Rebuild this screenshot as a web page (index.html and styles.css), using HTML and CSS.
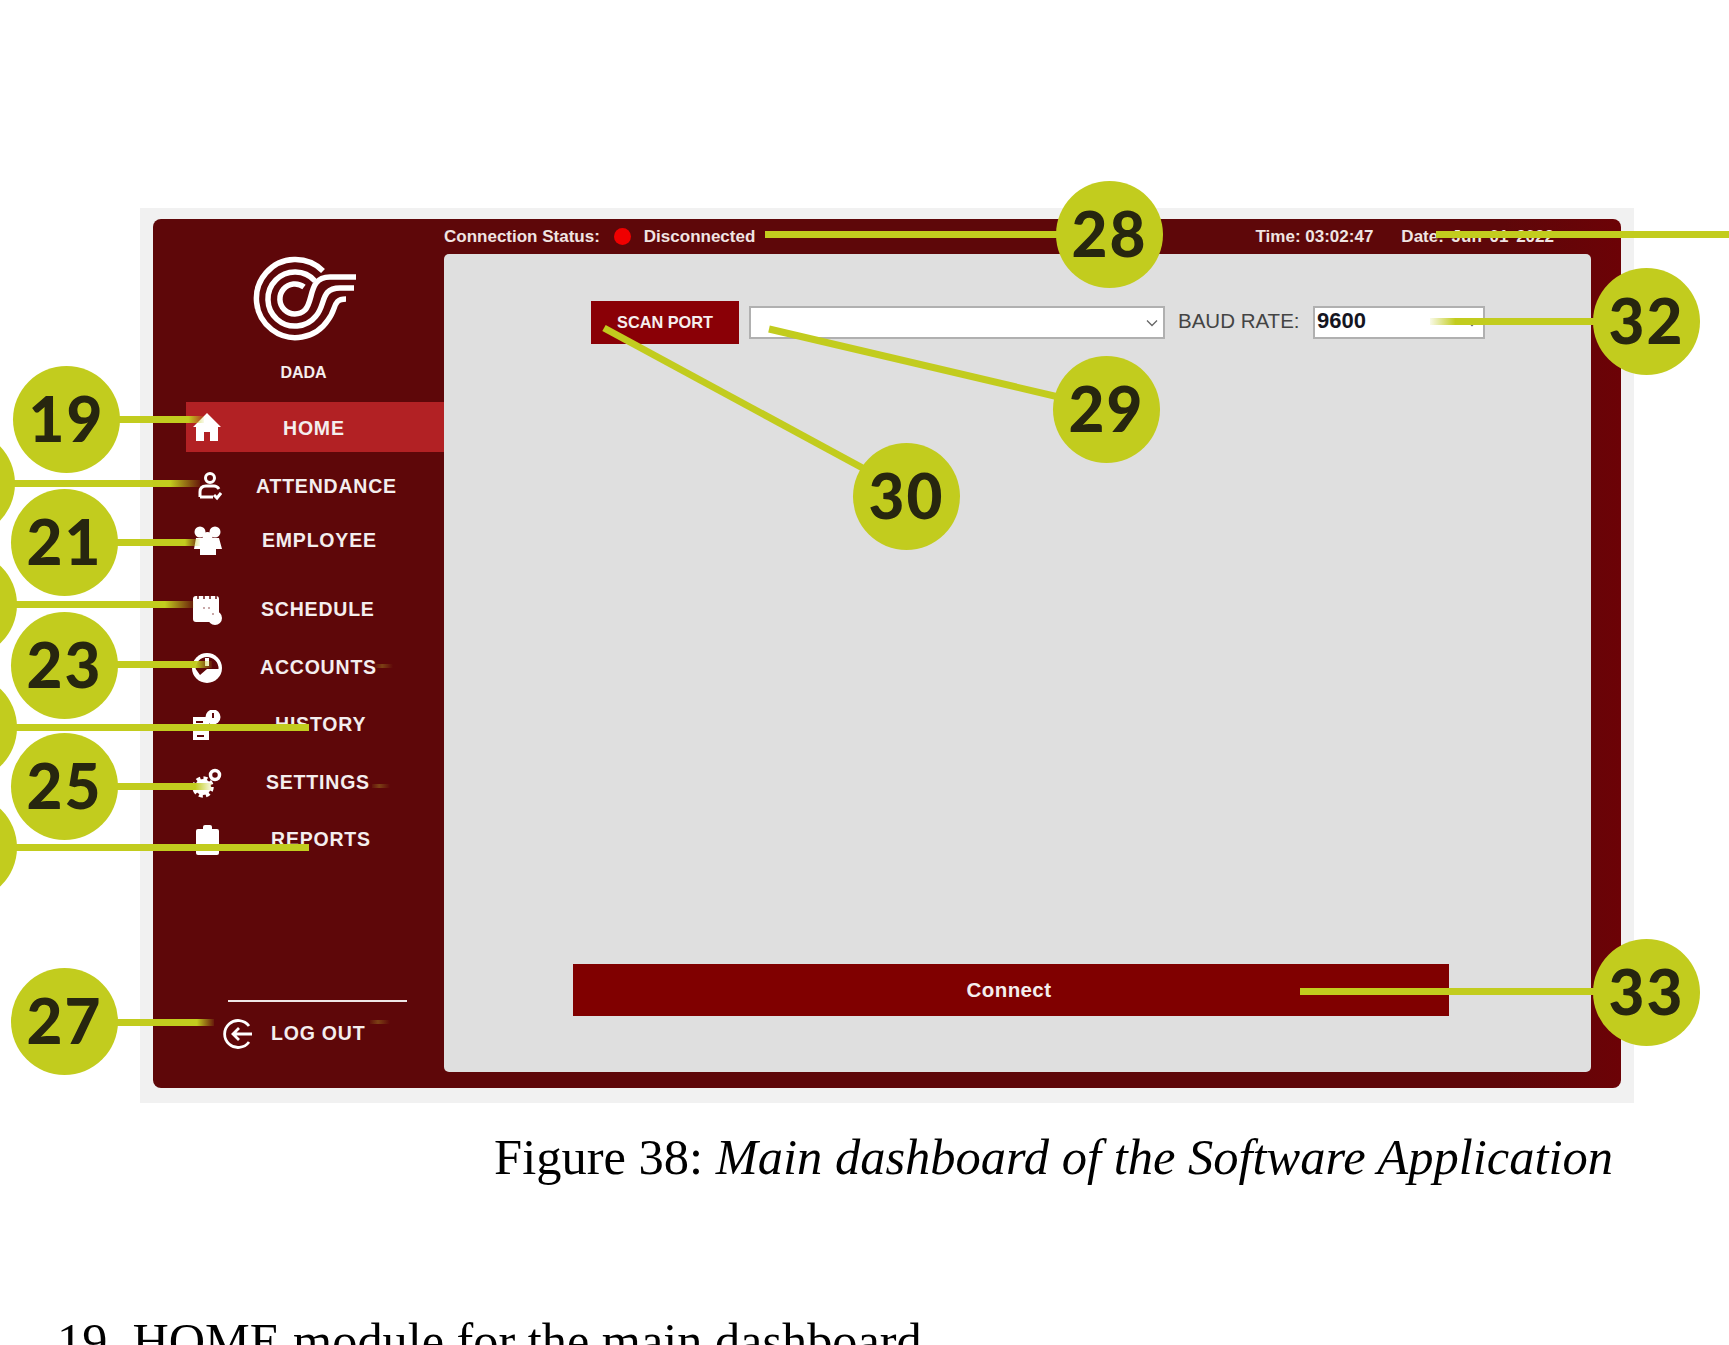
FILE: index.html
```html
<!DOCTYPE html>
<html lang="en">
<head>
    <meta charset="UTF-8">
    <title>Main dashboard of the Software Application</title>
    <link rel="stylesheet" href="styles.css">
</head>
<body>
    <div class="shot">
        <div class="app">
            <aside class="sidebar">
                <svg class="logo" viewBox="10 8 110 92" fill="none" stroke="#fff" stroke-width="5.500">
                    <path d="M64 40A15 15 0 1 0 65 63C74 54 68 30 90 30H116"/>
                    <path d="M75 34A27 27 0 1 0 76 69C86 58 80 41 100 41H114"/>
                    <path d="M83 24A39 39 0 1 0 88 73C97 62 92 52 106 52"/>
                </svg>
                <div class="brand">DADA</div>
                <ul class="nav">
                    <li class="nav-item active">
                        <svg class="icon" viewBox="0 0 30 30" fill="#fff"><path d="M15 1 29 15H26V29H18V20H12V29H4V15H1Z"/></svg>
                        <span class="home-label">HOME</span>
                    </li>
                    <li class="nav-item attendance">
                        <svg class="icon" viewBox="0 0 30 30" fill="none" stroke="#fff" stroke-width="3"><circle cx="18" cy="6" r="4.500"/><path d="M8 25V20Q8 14 14 14H22Q25 14 27 17M8 25H21"/><path d="M22 23 25 26 29 21"/></svg>
                        <span class="attendance-label">ATTENDANCE</span>
                    </li>
                    <li class="nav-item employee">
                        <svg class="icon" viewBox="0 0 30 30" fill="#fff"><circle cx="8" cy="6" r="5.500"/><circle cx="23" cy="6" r="5.500"/><circle cx="15.500" cy="11" r="5"/><path d="M4 12H27L30 23H24V29H8V23H2Z"/></svg>
                        <span class="employee-label">EMPLOYEE</span>
                    </li>
                    <li class="nav-item schedule">
                        <svg class="icon" viewBox="0 0 30 30" fill="#fff"><rect x="1" y="1" width="26" height="26" rx="3"/><circle cx="23" cy="23" r="7"/><path d="M5 1h2v3h-2zM11 1h2v3h-2zM17 1h2v3h-2zM23 1h2v3h-2z" fill="#8a4a4a"/><path d="M11 12h2v2h-2zM16 12h2v2h-2zM20 18h2v2h-2z" fill="#c9a9a9"/></svg>
                        <span class="schedule-label">SCHEDULE</span>
                    </li>
                    <li class="nav-item accounts">
                        <svg class="icon" viewBox="0 0 30 30" fill="#fff"><circle cx="15" cy="15" r="15"/><path d="M15 4A11.500 11.500 0 0 1 26.500 16H15L8 22 3.700 16A11.500 11.500 0 0 1 15 4Z" fill="#5e0709"/><path d="M13 5H17V13H13Z"/></svg>
                        <span class="accounts-label">ACCOUNTS</span>
                    </li>
                    <li class="nav-item history">
                        <svg class="icon" viewBox="0 0 30 30" fill="#fff"><path d="M1 7H17V30H1Z"/><circle cx="21" cy="7" r="7.500"/><path d="M4 11H11V13H4ZM5 25H12V27H5Z" fill="#5e0709"/><path d="M20 3H22V8H20Z" fill="#5e0709"/></svg>
                        <span class="history-label">HISTORY</span>
                    </li>
                    <li class="nav-item settings">
                        <svg class="icon" viewBox="0 0 30 30" fill="none" stroke="#fff"><circle cx="11" cy="19" r="7" fill="#fff" stroke-width="2"/><circle cx="11" cy="19" r="9" stroke-width="3.500" stroke-dasharray="4 3.100"/><circle cx="23" cy="7" r="4.500" stroke-width="3.500"/></svg>
                        <span class="settings-label">SETTINGS</span>
                    </li>
                    <li class="nav-item reports">
                        <svg class="icon" viewBox="0 0 30 30" fill="#fff"><rect x="4" y="4" width="23" height="26" rx="2"/><rect x="11" y="0" width="9" height="6" rx="2"/></svg>
                        <span class="reports-label">REPORTS</span>
                    </li>
                </ul>
                <div class="logout">
                    <svg class="logout-icon" viewBox="0 0 30 30" fill="none" stroke="#fff" stroke-width="2.800"><path d="M26 7A13.500 13.500 0 1 0 26 23"/><path d="M29 15H10M16 9 10 15 16 21"/></svg>
                    <span class="logout-label">LOG OUT</span>
                </div>
            </aside>
            <main class="main">
                <div class="statusbar">
                    <span>Connection Status:</span>
                    <span class="dot"></span>
                    <span>Disconnected</span>
                    <span class="clock">Time: 03:02:47</span>
                    <span class="date">Date: Jun 01 2022</span>
                </div>
                <section class="panel">
                    <div class="port-row">
                        <button class="scan-btn">SCAN PORT</button>
                        <div class="combo port-combo">
                            <svg class="chevron" viewBox="0 0 12 8" fill="none" stroke="#666" stroke-width="1.300"><path d="M1 1.500 6 6.500 11 1.500"/></svg>
                        </div>
                        <label class="baud-label">BAUD RATE:</label>
                        <div class="combo baud-combo">
                            <span class="baud-value">9600</span>
                            <svg class="chevron" viewBox="0 0 12 8" fill="none" stroke="#666" stroke-width="1.300"><path d="M1 1.500 6 6.500 11 1.500"/></svg>
                        </div>
                    </div>
                    <button class="connect-btn">Connect</button>
                </section>
            </main>
        </div>
    </div>

    <p class="caption">Figure 38: <em>Main dashboard of the Software Application</em></p>
    <p class="module-line">19. HOME module for the main dashboard</p>

    <!-- callouts drawn over the screenshot -->
    <svg class="callout-lines" viewBox="0 0 1729 1345">
        <defs>
            <linearGradient id="fade">
                <stop offset="0.85" stop-color="#c2cc1e"/>
                <stop offset="1" stop-color="#c2cc1e" stop-opacity="0.1"/>
            </linearGradient>
            <linearGradient id="fadeleft">
                <stop offset="0" stop-color="#c2cc1e" stop-opacity="0.1"/>
                <stop offset="0.15" stop-color="#c2cc1e"/>
            </linearGradient>
            <linearGradient id="smudge">
                <stop offset="0" stop-color="#9a7a20" stop-opacity="0.1"/>
                <stop offset="0.4" stop-color="#9a7a20" stop-opacity="0.5"/>
                <stop offset="1" stop-color="#9a7a20" stop-opacity="0"/>
            </linearGradient>
        </defs>
        <rect x="100" y="416" width="104" height="7" fill="url(#fade)"/>
        <rect x="0" y="480" width="200" height="7" fill="url(#fade)"/>
        <rect x="100" y="539" width="100" height="7" fill="url(#fade)"/>
        <rect x="0" y="601" width="194" height="7" fill="url(#fade)"/>
        <rect x="100" y="661" width="112" height="7" fill="url(#fade)"/>
        <rect x="0" y="724" width="309" height="7" fill="#c2cc1e"/>
        <rect x="100" y="783" width="112" height="7" fill="url(#fade)"/>
        <rect x="0" y="844" width="309" height="7" fill="#c2cc1e"/>
        <rect x="100" y="1019" width="114" height="7" fill="url(#fade)"/>
        <rect x="765" y="231" width="300" height="7" fill="#c2cc1e"/>
        <rect x="1436" y="231" width="293" height="7" fill="#c2cc1e"/>
        <rect x="1430" y="318" width="170" height="7" fill="url(#fadeleft)"/>
        <rect x="1300" y="988" width="300" height="7" fill="#c2cc1e"/>
        <rect x="375" y="664" width="18" height="4" fill="url(#smudge)"/>
        <rect x="372" y="784" width="18" height="4" fill="url(#smudge)"/>
        <rect x="370" y="1020" width="20" height="4" fill="url(#smudge)"/>
        <line x1="769" y1="329" x2="1080" y2="402" stroke="#c2cc1e" stroke-width="7"/>
        <line x1="604" y1="328" x2="870" y2="472" stroke="#c2cc1e" stroke-width="7"/>
    </svg>
    <div class="badge b19">19</div>
    <div class="badge b20"></div>
    <div class="badge b21">21</div>
    <div class="badge b22"></div>
    <div class="badge b23">23</div>
    <div class="badge b24"></div>
    <div class="badge b25">25</div>
    <div class="badge b26"></div>
    <div class="badge b27">27</div>
    <div class="badge b28">28</div>
    <div class="badge b29">29</div>
    <div class="badge b30">30</div>
    <div class="badge b32">32</div>
    <div class="badge b33">33</div>
</body>
</html>
```

FILE: styles.css
```css
* {
    box-sizing: border-box;
    margin: 0;
    padding: 0;
}
html, body {
    height: 100%;
    overflow: hidden;
}
body {
    background-color: #fff;
    color: #000;
    font-family: "Liberation Serif", serif;
    padding-top: 208px;
    position: relative;
}
.shot {
    background-color: #f1f1f1;
    height: 895px;
    margin-left: 140px;
    padding: 11px 13px 15px;
    width: 1494px;
}
.app {
    background: linear-gradient(90deg, #5e0709 92%, #6c0206);
    border-radius: 8px;
    display: flex;
    font-family: "Liberation Sans", sans-serif;
    height: 100%;
}

/* sidebar */
.sidebar {
    color: #f4eeee;
    display: flex;
    flex-direction: column;
    flex-shrink: 0;
    padding-top: 36px;
    width: 291px;
}
.logo {
    align-self: center;
    height: 92px;
    margin-left: 12px;
    width: 110px;
}
.brand {
    font-size: 16px;
    font-weight: bold;
    line-height: 20px;
    margin-left: 10px;
    margin-top: 16px;
    text-align: center;
}
.nav {
    list-style-type: none;
    margin-left: 33px;
    margin-top: 19px;
}
.nav-item {
    align-items: center;
    display: flex;
    font-size: 19.500px;
    font-weight: bold;
    height: 40px;
    letter-spacing: .8px;
    padding-left: 6px;
}
.nav-item span {
    padding-bottom: 2px;
}
.nav-item.active {
    background-color: #b22124;
    height: 50px;
}
.nav-item.active span {
    padding-bottom: 0;
    padding-top: 2px;
}
.icon {
    flex-shrink: 0;
    height: 30px;
    width: 30px;
}
.attendance { margin-top: 15px; }
.employee { margin-top: 14px; }
.schedule { margin-top: 29px; }
.accounts { margin-top: 18px; }
.history { margin-top: 17px; }
.settings { margin-top: 18px; }
.reports { margin-top: 17px; }
.home-label { margin-left: 61px; }
.attendance-label { margin-left: 34px; }
.employee-label { margin-left: 40px; }
.schedule-label { margin-left: 39px; }
.accounts-label { margin-left: 38px; }
.history-label { margin-left: 53px; }
.settings-label { margin-left: 44px; }
.reports-label { margin-left: 49px; }
.logout {
    align-items: center;
    border-top: 2px solid #efe6e6;
    display: flex;
    font-size: 19.500px;
    font-weight: bold;
    gap: 18px;
    height: 88px;
    letter-spacing: .8px;
    margin-left: 75px;
    margin-top: auto;
    padding-bottom: 22px;
    width: 179px;
}
.logout-icon {
    flex-shrink: 0;
    height: 30px;
    margin-left: -5px;
    width: 30px;
}
.logout-label {
    padding-bottom: 2px;
}

/* main */
.main {
    display: flex;
    flex: 1;
    flex-direction: column;
    padding: 0 30px 16px 0;
}
.statusbar {
    align-items: center;
    color: #f0e4e2;
    display: flex;
    font-size: 17px;
    font-weight: bold;
    height: 35px;
}
.dot {
    background-color: #f00000;
    border-radius: 50%;
    height: 17px;
    margin: 0 13px 0 14px;
    width: 17px;
}
.clock {
    margin-left: auto;
}
.date {
    margin: 0 37px 0 28px;
    word-spacing: 3px;
}
.panel {
    background-color: #dfdfdf;
    border-radius: 5px;
    display: flex;
    flex: 1;
    flex-direction: column;
    padding: 47px 0 56px 129px;
}
.port-row {
    align-items: center;
    display: flex;
    margin-left: 18px;
}
.scan-btn {
    background-color: #8a0006;
    border: 0;
    color: #f6eeee;
    font-family: "Liberation Sans", sans-serif;
    font-size: 16.300px;
    font-weight: bold;
    height: 43px;
    width: 148px;
}
.combo {
    align-items: center;
    background-color: #fff;
    border: 2px solid #b0b0b0;
    display: flex;
    height: 33px;
    justify-content: space-between;
    padding: 0 5px 0 2px;
}
.port-combo {
    justify-content: flex-end;
    margin-left: 10px;
    width: 416px;
}
.baud-label {
    color: #444;
    font-size: 20.500px;
    margin-left: 13px;
    padding-bottom: 3px;
    width: 135px;
}
.baud-combo {
    color: #15151f;
    font-size: 22px;
    font-weight: bold;
    width: 172px;
}
.baud-value {
    padding-bottom: 3px;
}
.chevron {
    height: 8px;
    width: 12px;
}
.connect-btn {
    background-color: #800000;
    border: 0;
    color: #f4eeee;
    font-family: "Liberation Sans", sans-serif;
    font-size: 20.500px;
    font-weight: bold;
    height: 52px;
    letter-spacing: .4px;
    margin-top: auto;
    padding-right: 4px;
    width: 876px;
}

/* text under the figure */
.caption {
    font-size: 50.500px;
    line-height: 58px;
    margin-top: 25px;
    padding-right: 116px;
    text-align: right;
}
.module-line {
    font-size: 50.300px;
    line-height: 58px;
    margin-left: 57px;
    margin-top: 126px;
    white-space: nowrap;
}

/* callouts */
.callout-lines {
    height: 1345px;
    left: 0;
    position: absolute;
    top: 0;
    width: 1729px;
}
.badge {
    align-items: center;
    background-color: #c2cc1e;
    border-radius: 50%;
    color: #27260f;
    display: flex;
    font-family: Lato, sans-serif;
    font-size: 62px;
    font-weight: 900;
    height: 107px;
    justify-content: center;
    letter-spacing: 2px;
    padding-bottom: 3px;
    position: absolute;
    width: 107px;
}
.b19 { left: 13px; top: 366px; }
.b20 { left: -92px; top: 430px; }
.b21 { left: 11px; top: 489px; }
.b22 { left: -90px; top: 551px; }
.b23 { left: 11px; top: 612px; }
.b24 { left: -90px; top: 674px; }
.b25 { left: 11px; top: 733px; }
.b26 { left: -90px; top: 794px; }
.b27 { left: 11px; top: 968px; }
.b28 { left: 1056px; top: 181px; }
.b29 { left: 1053px; top: 356px; }
.b30 { left: 853px; top: 443px; }
.b32 { left: 1593px; top: 268px; }
.b33 { left: 1593px; top: 939px; }
```
